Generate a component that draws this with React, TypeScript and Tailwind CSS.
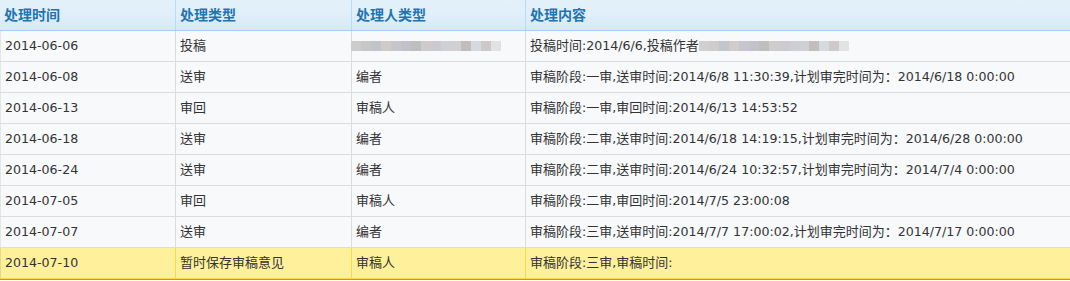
import React from 'react';

interface Row {
  date: string;
  type: string;
  who: string;
  content: string;
  blurWho?: boolean;
  blurContent?: boolean;
  draft?: boolean;
}

const rows: Row[] = [
  { date: '2014-06-06', type: '投稿', who: '', content: '投稿时间:2014/6/6,投稿作者', blurWho: true, blurContent: true },
  { date: '2014-06-08', type: '送审', who: '编者', content: '审稿阶段:一审,送审时间:2014/6/8 11:30:39,计划审完时间为：2014/6/18 0:00:00' },
  { date: '2014-06-13', type: '审回', who: '审稿人', content: '审稿阶段:一审,审回时间:2014/6/13 14:53:52' },
  { date: '2014-06-18', type: '送审', who: '编者', content: '审稿阶段:二审,送审时间:2014/6/18 14:19:15,计划审完时间为：2014/6/28 0:00:00' },
  { date: '2014-06-24', type: '送审', who: '编者', content: '审稿阶段:二审,送审时间:2014/6/24 10:32:57,计划审完时间为：2014/7/4 0:00:00' },
  { date: '2014-07-05', type: '审回', who: '审稿人', content: '审稿阶段:二审,审回时间:2014/7/5 23:00:08' },
  { date: '2014-07-07', type: '送审', who: '编者', content: '审稿阶段:三审,送审时间:2014/7/7 17:00:02,计划审完时间为：2014/7/17 0:00:00' },
  { date: '2014-07-10', type: '暂时保存审稿意见', who: '审稿人', content: '审稿阶段:三审,审稿时间:', draft: true },
];

const blurA = ['#cdcccd', '#c8c7c8', '#c2c4cc', '#d0cbc8', '#c6c6cc', '#c2c1c9', '#bebebe', '#cfcbcb', '#ccc9cf', '#cfd0d4', '#d0cfd2', '#c1bdbd', '#d6dae0', '#ccc9c8', '#e2e2e2'];
const blurB = ['#d2cfcf', '#cfcccc', '#c4c6cf', '#d1ccc9', '#c7c6cd', '#c3c2cb', '#bfbfbf', '#d0cccc', '#cdcad0', '#cdced3', '#d0cfd3', '#c2bebe', '#d6dae0', '#cdcac9', '#e3e3e3'];

// latin runs are set a little smaller than the CJK ones, like the original page
const Txt: React.FC<{ s: string }> = ({ s }) => (
  <>
    {s.split(/([\u0020-\u00ff]+)/).filter(Boolean).map((part, i) =>
      /^[\u0020-\u00ff]+$/.test(part) ? (
        <span key={i} className="text-[12.6px] whitespace-pre">{part}</span>
      ) : (
        <span key={i}>{part}</span>
      )
    )}
  </>
);

const Smudge: React.FC<{ colors: string[]; className?: string }> = ({ colors, className }) => (
  <div className={`flex h-[10px] blur-[0.6px] ${className ?? ''}`}>
    {colors.map((c, i) => (
      <div key={i} className="w-[10px] h-full" style={{ backgroundColor: c }} />
    ))}
  </div>
);

const App: React.FC = () => {
  return (
    <div className="w-[1070px] h-[281px] bg-white text-[13px] text-[#333] font-['DejaVu_Sans','Noto_Sans_CJK_SC',sans-serif]">
      <div className="flex h-[31px] border-b border-[#a8cff0] bg-gradient-to-b from-[#e4f1fb] via-[#e0eff9] to-[#d6e9f7] text-[14px] font-bold text-[#1f74b3]">
        <div className="w-[176px] border-r border-[#b9dbf3] pl-1 flex items-center">处理时间</div>
        <div className="w-[176px] border-r border-[#b9dbf3] pl-1 flex items-center">处理类型</div>
        <div className="w-[174px] border-r border-[#b9dbf3] pl-1 flex items-center">处理人类型</div>
        <div className="flex-1 pl-1 flex items-center">处理内容</div>
      </div>

      {rows.map((r) => {
        const line = r.draft ? 'border-[#f6da4a]' : 'border-[#dcdcdc]';
        return (
          <div
            key={r.date}
            className={`flex h-[31px] border-b ${line} ${r.draft ? 'bg-[#fff09c]' : 'bg-[#f8f9fb]'}`}
          >
            <div className={`w-[176px] border-l border-r ${r.draft ? 'border-l-[#e4d98c] border-r-[#f6da4a]' : 'border-l-[#e6e6e6] border-r-[#dcdcdc]'} pl-1 flex items-center`}>
              <Txt s={r.date} />
            </div>
            <div className={`w-[176px] border-r ${line} pl-1 flex items-center`}>
              <Txt s={r.type} />
            </div>
            <div className={`w-[174px] border-r ${line} pl-1 flex items-center`}>
              {r.blurWho ? <Smudge colors={blurA} className="-ml-[5px]" /> : <Txt s={r.who} />}
            </div>
            <div className="flex-1 pl-1 flex items-center whitespace-nowrap">
              <Txt s={r.content} />
              {r.blurContent && <Smudge colors={blurB} />}
            </div>
          </div>
        );
      })}
      <div className="h-px bg-[#9a9a9a]" />
    </div>
  );
};

export default App;
